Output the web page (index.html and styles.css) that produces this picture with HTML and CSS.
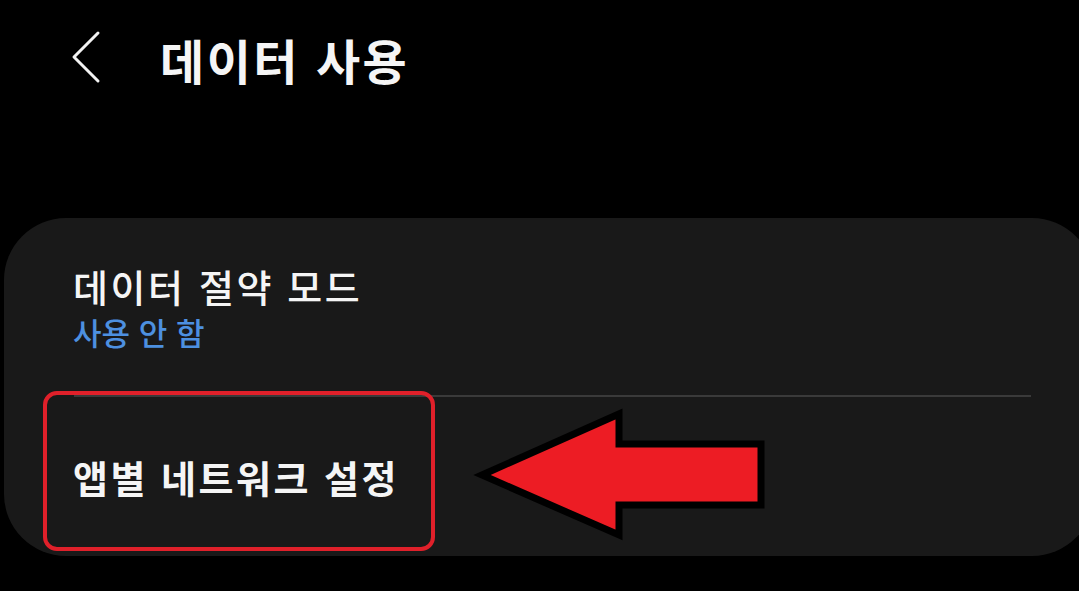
FILE: index.html
```html
<!DOCTYPE html>
<html lang="ko">
<head>
<meta charset="utf-8">
<link rel="stylesheet" href="styles.css">
</head>
<body>
<header class="appbar">
  <svg class="back" width="34" height="56" viewBox="0 0 34 56"><polyline points="28,3 4,27 28,51" fill="none" stroke="#f2f2f2" stroke-width="3" stroke-linecap="round" stroke-linejoin="round"/></svg>
  <h1 class="title">데이터 사용</h1>
</header>
<section class="card">
  <div class="item item-first">
    <div class="item-title">데이터 절약 모드</div>
    <div class="item-sub">사용 안 함</div>
  </div>
  <div class="divider"></div>
  <div class="item item-second">
    <div class="item-title">앱별 네트워크 설정</div>
    <div class="highlight"></div>
    <svg class="arrow" width="306" height="145" viewBox="0 0 306 145"><polygon points="16,73 153,12 153,42 295,42 295,103 153,103 153,133" fill="#ed1c24" stroke="#000" stroke-width="7" stroke-linejoin="miter"/></svg>
  </div>
</section>
</body>
</html>
```
FILE: styles.css
```css
html, body {
  margin: 0;
  padding: 0;
  background: #000;
}
body {
  width: 1079px;
  height: 591px;
  overflow: hidden;
  font-family: "Noto Sans CJK KR", "Noto Sans", sans-serif;
  color: #f5f5f5;
}
.appbar {
  display: flex;
  align-items: center;
  height: 120px;
  padding-left: 70px;
  box-sizing: border-box;
}
.back {
  display: block;
  margin-top: -4px;
}
.title {
  margin: -2px 0 0 56px;
  font-size: 48px;
  font-weight: 700;
  line-height: 1;
  letter-spacing: 2.5px;
}
.card {
  margin: 98px 0 0 4px;
  width: 1090px;
  height: 338px;
  background: #191919;
  border-radius: 62px;
  position: relative;
  box-sizing: border-box;
}
.item {
  padding-left: 69px;
}
.item-first {
  padding-top: 46px;
  height: 177px;
  box-sizing: border-box;
}
.item-title {
  font-size: 38px;
  font-weight: 500;
  line-height: 44px;
  letter-spacing: 2.6px;
}
.item-sub {
  font-size: 31px;
  font-weight: 500;
  line-height: 38px;
  margin-top: 5px;
  color: #4d90e0;
  letter-spacing: 0;
}
.item-second .item-title {
  font-weight: 700;
  letter-spacing: 2.5px;
}
.divider {
  height: 2px;
  background: #3a3a3a;
  margin: 0 63px 0 70px;
}
.item-second {
  position: relative;
  padding-top: 58px;
  height: 159px;
  box-sizing: border-box;
}
.highlight {
  position: absolute;
  left: 39px;
  top: -6px;
  width: 392px;
  height: 160px;
  box-sizing: border-box;
  border: 4px solid #e0202a;
  border-radius: 14px;
}
.arrow {
  position: absolute;
  left: 462px;
  top: 5px;
}
```
